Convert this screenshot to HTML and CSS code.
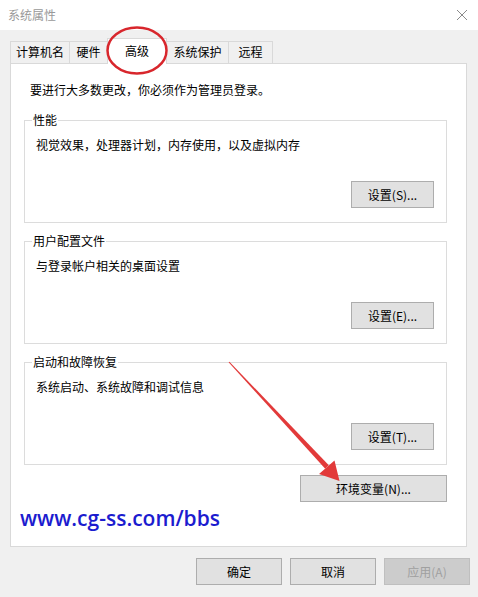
FILE: index.html
```html
<!DOCTYPE html>
<html lang="zh-CN">
<head>
    <meta charset="UTF-8">
    <meta name="viewport" content="width=device-width, initial-scale=1.0">
    <title>系统属性</title>
    <link rel="stylesheet" href="styles.css">
</head>
<body>
    <div class="window">
        <div class="titlebar">
            <span class="title">系统属性</span>
            <svg class="close" width="12" height="12" viewBox="0 0 12 12">
                <path d="M1 1 L11 11 M11 1 L1 11" stroke="#8a8a8a" stroke-width="1" fill="none"/>
            </svg>
        </div>

        <div class="tabs">
            <div class="tab tab-name">计算机名</div>
            <div class="tab tab-hw">硬件</div>
            <div class="tab tab-adv active">高级</div>
            <div class="tab tab-prot">系统保护</div>
            <div class="tab tab-remote">远程</div>
        </div>

        <div class="panel">
            <p class="intro">要进行大多数更改，你必须作为管理员登录。</p>

            <fieldset class="group">
                <legend>性能</legend>
                <p class="desc">视觉效果，处理器计划，内存使用，以及虚拟内存</p>
                <div class="group-actions">
                    <button class="btn btn-set">设置(S)...</button>
                </div>
            </fieldset>

            <fieldset class="group">
                <legend>用户配置文件</legend>
                <p class="desc">与登录帐户相关的桌面设置</p>
                <div class="group-actions">
                    <button class="btn btn-set">设置(E)...</button>
                </div>
            </fieldset>

            <fieldset class="group">
                <legend>启动和故障恢复</legend>
                <p class="desc">系统启动、系统故障和调试信息</p>
                <div class="group-actions">
                    <button class="btn btn-set">设置(T)...</button>
                </div>
            </fieldset>

            <div class="env-row">
                <button class="btn btn-env">环境变量(N)...</button>
            </div>

            <div class="watermark">www.cg-ss.com/bbs</div>
        </div>

        <div class="footer">
            <button class="btn btn-footer">确定</button>
            <button class="btn btn-footer">取消</button>
            <button class="btn btn-footer" disabled>应用(A)</button>
        </div>

        <!-- red marks drawn over the screenshot -->
        <svg class="marks" width="478" height="597" viewBox="0 0 478 597">
            <ellipse cx="137" cy="50.5" rx="29.5" ry="23" fill="none" stroke="#d8262c" stroke-width="2.5"/>
            <polygon points="229.4,361.7 328.8,465.3 325.2,468.7 228.6,362.3" fill="#e23a3a"/>
            <polygon points="339.5,481 319,474 326.5,467.5 334.5,460.5" fill="#e23a3a"/>
        </svg>
    </div>
</body>
</html>
```

FILE: styles.css
```css
body {
    margin: 0;
    background-color: #f0f0f0;
    font-family: "Noto Sans CJK SC", "Microsoft YaHei", sans-serif;
    font-size: 12px;
    color: #000;
}
.window {
    position: relative;
    width: 478px;
    height: 597px;
    background-color: #f0f0f0;
    overflow: hidden;
}
.titlebar {
    height: 30px;
    background-color: #fff;
    display: flex;
    align-items: center;
    justify-content: space-between;
    padding: 0 10px 0 8px;
}
.title {
    color: #999;
    line-height: 16px;
}
.tabs {
    height: 33px;
    display: flex;
    align-items: flex-end;
    padding-left: 10px;
}
.tab {
    box-sizing: border-box;
    height: 22px;
    line-height: 20px;
    text-align: center;
    border: 1px solid #d9d9d9;
    border-bottom: none;
    background-color: #f0f0f0;
    margin-left: -1px;
}
.tab-name {
    width: 60px;
    margin-left: 0;
}
.tab-hw {
    width: 39px;
}
.tab-adv {
    width: 60px;
}
.tab-prot {
    width: 63px;
}
.tab-remote {
    width: 45px;
}
.tab.active {
    position: relative;
    z-index: 1;
    height: 26px;
    line-height: 24px;
    margin-bottom: -1px;
    background-color: #fff;
}
.panel {
    box-sizing: border-box;
    width: 457px;
    height: 484px;
    margin-left: 10px;
    padding: 18px 19px 0 13px;
    background-color: #fff;
    border: 1px solid #d9d9d9;
}
.intro {
    margin: 0 0 14px 6px;
    line-height: 16px;
}
.group {
    margin: 0 0 10px 0;
    padding: 0 12px 14px 7px;
    border: 1px solid #dcdcdc;
}
.group legend {
    padding: 0 1px;
    line-height: 16px;
}
.desc {
    margin: 9px 0 0 4px;
    line-height: 16px;
}
.group-actions {
    display: flex;
    justify-content: flex-end;
    margin-top: 28px;
}
.btn {
    box-sizing: border-box;
    height: 27px;
    padding: 0;
    background-color: #e1e1e1;
    border: 1px solid #adadad;
    font-family: inherit;
    font-size: 12px;
    color: #000;
}
.btn-set {
    width: 83px;
}
.env-row {
    display: flex;
    justify-content: flex-end;
    margin-top: 8px;
}
.btn-env {
    width: 147px;
}
.watermark {
    margin: 2px 0 0 -4px;
    font-family: "Open Sans", sans-serif;
    font-weight: 600;
    font-size: 21px;
    line-height: 28px;
    color: #1c1ccf;
}
.footer {
    display: flex;
    justify-content: flex-end;
    gap: 8px;
    padding: 11px 8px 0 0;
}
.btn-footer {
    width: 86px;
}
.btn-footer:disabled {
    background-color: #cccccc;
    border-color: #bfbfbf;
    color: #a0a0a0;
}
.marks {
    position: absolute;
    left: 0;
    top: 0;
    z-index: 2;
    pointer-events: none;
}
```
